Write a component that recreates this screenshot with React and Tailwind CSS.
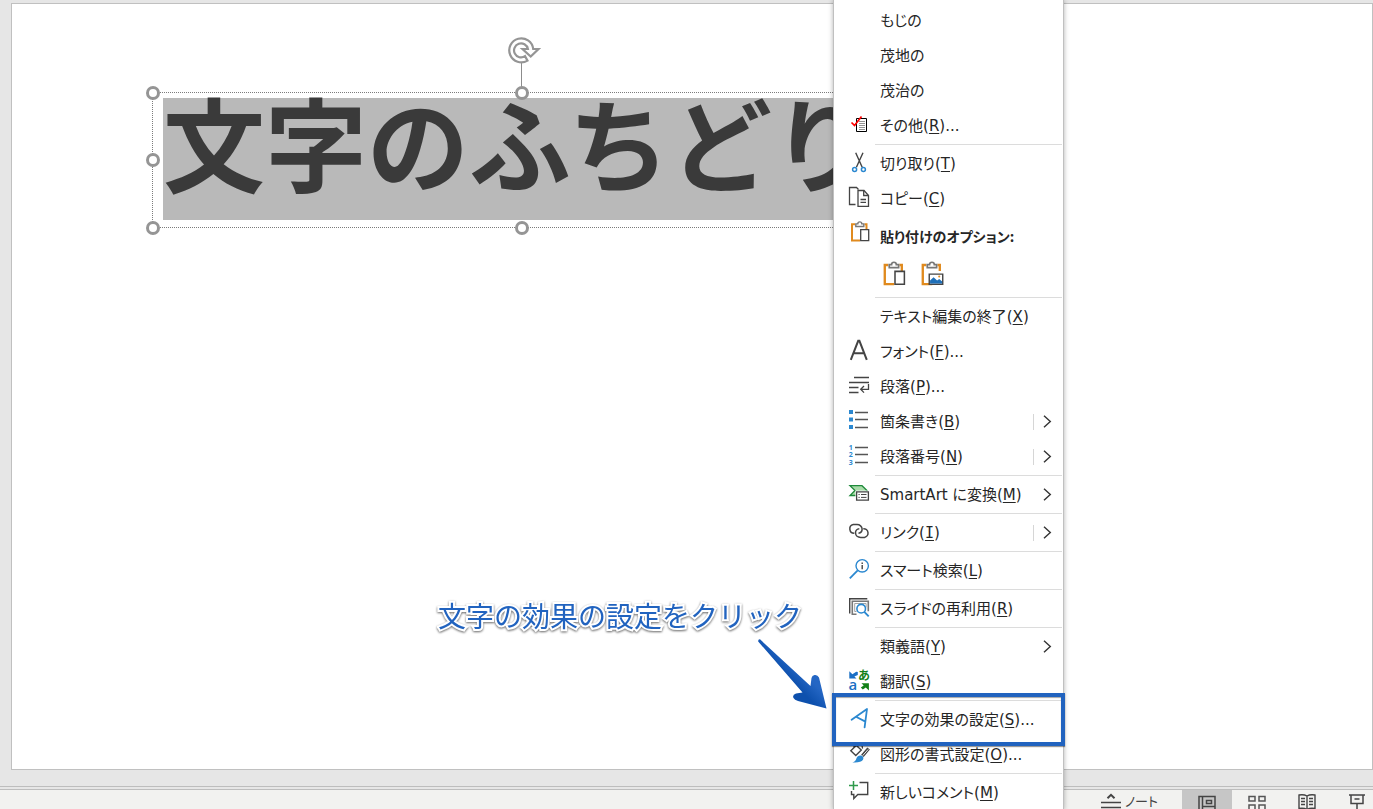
import React from "react";

const svg = { width: 22, height: 23, viewBox: "0 0 22 23", fill: "none", overflow: "visible", "aria-hidden": true };
const INK = "#444444";
const BLUE = "#2b88d0";

const icons = {
  more: (
    <svg {...svg}>
      <path d="M8.5 4.5h10v13h-10z" stroke="#000" fill="#fff" />
      <path d="M11 7.5h6M11 9.5h6M11 11.5h6M11 13.5h6M11 15.5h6" stroke="#888" strokeWidth="0.9" />
      <path d="M3.5 8.5l3 3 7-9" stroke="#f00" strokeWidth="1.7" />
    </svg>
  ),
  cut: (
    <svg {...svg}>
      <path d="M7.7 0.8l6.5 14.5M15 0.8L8.4 15.3" stroke={INK} strokeWidth="1.4" />
      <circle cx="6.6" cy="17.6" r="2" stroke={BLUE} strokeWidth="1.5" />
      <circle cx="15.4" cy="17.6" r="2" stroke={BLUE} strokeWidth="1.5" />
    </svg>
  ),
  copy: (
    <svg {...svg}>
      <path d="M7.5 17.5h-6V0.5h7l2 2" stroke={INK} strokeWidth="1.3" />
      <path d="M10 3.5h6l4.5 5v10.8H10z" stroke={INK} strokeWidth="1.3" fill="#fff" />
      <path d="M15.7 3.5v5h4.8M12.5 12.5h5.5M12.5 15.3h5.5" stroke={INK} strokeWidth="1.3" />
    </svg>
  ),
  font: (
    <svg {...svg}>
      <path d="M2.8 19.8L10.2 0.800h1.200L18.800 19.800M5.400 13.300h10.800" stroke={INK} strokeWidth="2" />
    </svg>
  ),
  paragraph: (
    <svg {...svg}>
      <path d="M6 2.5h15M1 7.5h20M1 12.5h9.5M1 17.5h9.5M20.5 9v5.3h-7.5M16 11l-3.3 3.3L16 17.6" stroke={INK} strokeWidth="1.3" />
    </svg>
  ),
  bullets: (
    <svg {...svg}>
      <path d="M1 0h4v4H1zM1 7.4h4v4H1zM1 15h4v4H1z" fill={BLUE} />
      <path d="M7 2.5h13M7 9.5h13M7 17.5h13" stroke="#555" strokeWidth="1.4" />
    </svg>
  ),
  numbers: (
    <svg {...svg}>
      <g fill={BLUE} fontSize="7" fontWeight="700" fontFamily="Open Sans, sans-serif">
        <text x="0.8" y="4.6">1</text>
        <text x="0.8" y="12.4">2</text>
        <text x="0.8" y="20">3</text>
      </g>
      <path d="M7 2.5h13M7 9.5h13M7 17.5h13" stroke="#555" strokeWidth="1.4" />
    </svg>
  ),
  smartart: (
    <svg {...svg}>
      <path d="M2 2.7h12L19 7.5l-5 5H2l5-5z" fill="#a9dba9" stroke="#1f8a3b" strokeWidth="1.3" />
      <path d="M7.4 7.6H22v10.9H7.4z" fill="#fff" />
      <path d="M8.6 8.8h11.8v8.4H8.6z" stroke={INK} strokeWidth="1.3" />
      <path d="M10.5 11.5h1.2M13 11.5h5.5M10.5 14.4h1.2M13 14.4h5.5" stroke={INK} />
    </svg>
  ),
  link: (
    <svg {...svg}>
      <path d="M6.3 12.3A4.4 4.4 0 0 1 5.3 3.6h3.8c2.6 0 5 1.9 5 4.5a4 4 0 0 1-3.6 4.1" stroke={INK} strokeWidth="1.5" />
      <path d="M15.3 7.7a4.4 4.4 0 0 1 1.2 8.7h-3.8c-2.8 0-5.2-1.900-5.200-4.600a4 4 0 0 1 3.800-4.100" stroke={INK} strokeWidth="1.5" />
    </svg>
  ),
  search: (
    <svg {...svg}>
      <circle cx="14.2" cy="6.8" r="6.2" stroke={BLUE} strokeWidth="1.4" />
      <path d="M9.7 11.3L1.8 19.4" stroke={BLUE} strokeWidth="1.8" />
      <path d="M14.2 3.6v1.3M14.2 6v4.3" stroke={INK} strokeWidth="1.4" />
    </svg>
  ),
  reuse: (
    <svg {...svg}>
      <path d="M1.7 16.5V1.7h17.6" stroke={INK} strokeWidth="1.4" />
      <path d="M8.5 17.3H4.3V4.3h16v10" stroke="#777" strokeWidth="1.6" />
      <path d="M8.5 14.5h-1.8v-8h11.4v4" stroke="#999" strokeWidth="0.9" />
      <circle cx="13.2" cy="11.7" r="4.3" stroke={BLUE} strokeWidth="1.6" fill="#fff" />
      <path d="M16.3 14.9l4.4 4.4" stroke={BLUE} strokeWidth="1.9" />
    </svg>
  ),
  translate: (
    <svg {...svg}>
      <path d="M1.3 1.3v7.2h7.200L6.400 6.400l3.400-1.400V2L8.200 1.800 4.400 4.200z" fill="#1a6fc4" />
      <path d="M20.900 20.500v-7.200h-7.400l2.200 2.200-2.900 1.900 2 2.100 3-2z" fill="#128018" />
      <text x="0.6" y="20.3" fontSize="15" fontWeight="600" fontFamily="Open Sans, sans-serif" fill="#1a6fc4">a</text>
      <text x="10.2" y="9.8" fontSize="12" fontWeight="700" fontFamily="Noto Sans CJK JP, sans-serif" fill="#128018">あ</text>
    </svg>
  ),
  effects: (
    <svg {...svg}>
      <path d="M3.600 11.800L19 1 16.600 19.300M8 8.800l9.400 4.800" stroke={BLUE} strokeWidth="1.800" strokeLinejoin="round" strokeLinecap="round" />
    </svg>
  ),
  shape: (
    <svg {...svg}>
      <path d="M8.3 2.5l5 4.500-5.500 5.500-5-4.800zM5.500 4.500L8 1.500l2.500 3" stroke={INK} strokeWidth="1.400" />
      <path d="M13 1.800c1 .8 1.600 2 1.500 3.800" stroke={INK} strokeWidth="1.300" />
      <path d="M20.600 5.500l-6.200 7.300" stroke={INK} strokeWidth="3.400" />
      <path d="M20.200 6.400l-5.500 6.300" stroke="#fff" strokeWidth="0.900" />
      <path d="M13.200 12.600c2 .6 2.800 2.300 1.800 4.200-1.500 2.400-5.500 3-10.600 2.600 2.900-1 3.400-2 4-3.900.7-2.100 2.800-3.400 4.800-2.900z" fill={BLUE} />
    </svg>
  ),
  comment: (
    <svg {...svg}>
      <path d="M5.500 0v9M1 4.500h9" stroke="#2f9a4b" strokeWidth="1.500" />
      <path d="M11.500 1.500h8.200v12H9.800l-4 4v-4H3.500V10" stroke={INK} strokeWidth="1.400" />
    </svg>
  ),
};

function Clipboard({ picture = false, large = false }) {
  return (
    <svg width={large ? 26 : 22} height={large ? 27 : 23} viewBox="0 0 22 23" fill="none" aria-hidden="true">
      <path d="M7 4.300H4v16.200h8M16.500 4.300h2v5" stroke="#e08a1e" strokeWidth="2" />
      <path d="M7.800 6.500V3.900h2a2 2 0 0 1 4 0h2v2.600z" stroke="#777" strokeWidth="1.400" fill="#fff" />
      {picture ? (
        <>
          <path d="M9.500 12h11.500v8.600H9.500z" fill="#fff" stroke={INK} strokeWidth="1.200" />
          <path d="M10.200 17.500l3-2.700 3 2.700 1.800-1.300 2.500 2.200V20H10.200z" fill="#1f6fb8" />
          <circle cx="18" cy="14" r="0.900" fill="#e08a1e" />
        </>
      ) : (
        <path d="M12.700 9.700h8v10.900h-8z" fill="#fff" stroke={INK} strokeWidth="1.300" />
      )}
    </svg>
  );
}

function Item({ icon, text, k, dots, arrow, split }) {
  return (
    <button type="button" role="menuitem" className="flex h-[35px] w-full items-center pr-[10px] pl-[14px] text-left">
      <span className="w-8 shrink-0">{icon && icons[icon]}</span>
      <span className="flex-1 whitespace-nowrap">
        {text}
        {k && (
          <>
            (<u className={k === "I" ? "font-['DejaVu_Sans_Mono'] underline-offset-2" : "underline-offset-2"}>{k}</u>)
          </>
        )}
        {dots && "..."}
      </span>
      {split && <span className="mr-[9px] h-4 w-px bg-[#d6d6d6]" />}
      {arrow && (
        <svg width="9" height="13" viewBox="0 0 9 13" fill="none" aria-hidden="true">
          <path d="M1 0.700l6.300 5.800L1 12.300" stroke="#333" strokeWidth="1.400" />
        </svg>
      )}
    </button>
  );
}

const Line = () => <div role="separator" className="my-px ml-[41px] h-px bg-[#dcdcdc]" />;

function Menu() {
  return (
    <div
      role="menu"
      className="absolute top-0 left-[833px] w-[231px] border-x border-[#c0c0c0] bg-white pt-[3px] pr-px font-['DejaVu_Sans','Noto_Sans_CJK_JP',sans-serif] text-[15px] leading-5 text-[#262626] shadow-[0_0_5px_rgba(0,0,0,0.3)] [font-feature-settings:'palt']"
    >
      <Item text="もじの" />
      <Item text="茂地の" />
      <Item text="茂治の" />
      <Item icon="more" text="その他" k="R" dots />
      <Line />
      <Item icon="cut" text="切り取り" k="T" />
      <Item icon="copy" text="コピー" k="C" />
      <div className="flex h-10 pt-1 pl-[14px]">
        <span className="w-8">
          <Clipboard />
        </span>
        <span className="pt-[6px] font-['Noto_Sans_CJK_JP',sans-serif] text-[14px] font-bold whitespace-nowrap">貼り付けのオプション:</span>
      </div>
      <div className="flex h-10 gap-3 pt-1 pl-[46px]">
        <button type="button" aria-label="貼り付け" className="flex h-7 w-[26px]">
          <Clipboard large />
        </button>
        <button type="button" aria-label="図" className="flex h-7 w-[26px]">
          <Clipboard large picture />
        </button>
      </div>
      <Line />
      <Item text="テキスト編集の終了" k="X" />
      <Item icon="font" text="フォント" k="F" dots />
      <Item icon="paragraph" text="段落" k="P" dots />
      <Item icon="bullets" text="箇条書き" k="B" arrow split />
      <Item icon="numbers" text="段落番号" k="N" arrow split />
      <Line />
      <Item icon="smartart" text="SmartArt に変換" k="M" arrow />
      <Line />
      <Item icon="link" text="リンク" k="I" arrow split />
      <Line />
      <Item icon="search" text="スマート検索" k="L" />
      <Line />
      <Item icon="reuse" text="スライドの再利用" k="R" />
      <Line />
      <Item text="類義語" k="Y" arrow />
      <Item icon="translate" text="翻訳" k="S" />
      <Line />
      <Item icon="effects" text="文字の効果の設定" k="S" dots />
      <Item icon="shape" text="図形の書式設定" k="O" dots />
      <Line />
      <Item icon="comment" text="新しいコメント" k="M" />
    </div>
  );
}

const handle = "absolute size-[14px] rounded-full border-[3px] border-[#959595] bg-white";

function TextBox() {
  return (
    <div className="absolute top-[88px] left-[140px] w-[739px] border border-dotted border-[#7c7c7c] pt-[5px] pb-[7px] pl-[10px]">
      <div className="w-[714px] bg-[#b9b9b9] pb-9 font-['Noto_Sans_CJK_JP',sans-serif] text-[102px] leading-[86px] font-bold whitespace-nowrap text-[#3a3a3a]">
        文字のふちどり
      </div>
      <span className="absolute -top-[30px] left-[368px] h-6 w-px bg-[#8c8c8c]" />
      <svg className="absolute -top-[57px] left-[353px]" width="36" height="30" viewBox="0 0 36 30" fill="none" stroke="#959595" strokeWidth="2.2" aria-hidden="true">
        <path d="M21.500 24.600A12 12 0 1 1 27.200 13H32.500L24.700 20.500 16.500 13H21.900A7 7 0 1 0 19 20.200z" />
      </svg>
      <span className={`${handle} -top-[7px] -left-[7px]`} />
      <span className={`${handle} -top-[7px] left-[362px]`} />
      <span className={`${handle} top-[60px] -left-[7px]`} />
      <span className={`${handle} -bottom-[8px] -left-[7px]`} />
      <span className={`${handle} -bottom-[8px] left-[362px]`} />
    </div>
  );
}

function StatusBar() {
  const view = "flex w-[50px] shrink-0 justify-center pt-1";
  return (
    <footer className="mt-[2px] flex h-5 justify-end overflow-hidden border-t border-[#bdbdbd] bg-[#f2f2f0] font-['Noto_Sans_CJK_JP',sans-serif] text-[#444]">
      <button type="button" className="mr-6 flex gap-1 pt-[3px] text-[13px] leading-4 [font-feature-settings:'palt']">
        <svg width="20" height="16" viewBox="0 0 20 16" fill="none" stroke="#444" strokeWidth="1.300" aria-hidden="true">
          <path d="M0 9.500h20M0 14.500h20" />
          <path d="M6.500 5.200L10 1.800l3.500 3.400" strokeWidth="2" />
        </svg>
        ノート
      </button>
      <nav aria-label="表示" className="-mr-[9px] flex">
        <button type="button" aria-label="標準" className={`${view} bg-[#c6c6c6]`}>
          <svg width="18" height="18" viewBox="0 0 18 18" fill="none" stroke="#444" strokeWidth="1.500" aria-hidden="true">
            <path d="M1 2.500h16v15H1zM4.500 2.500v15M4.500 12.500H17M8.500 6.500h5v3h-5z" />
          </svg>
        </button>
        <button type="button" aria-label="スライド一覧" className={view}>
          <svg width="18" height="18" viewBox="0 0 18 18" fill="none" stroke="#555" strokeWidth="1.500" aria-hidden="true">
            <path d="M1 2.500h6v4.500H1zM11 2.500h6v4.500h-6zM1 11h6v5H1zM11 11h6v5h-6z" />
          </svg>
        </button>
        <button type="button" aria-label="閲覧表示" className={view}>
          <svg width="18" height="18" viewBox="0 0 18 18" fill="none" stroke="#444" strokeWidth="1.400" aria-hidden="true">
            <path d="M9 2C7 .800 4 .500 1 1v13.500c3-.500 6-.200 8 1 2-1.200 5-1.500 8-1V1c-3-.500-6-.200-8 1zM9 2v14M3 4.500h4M3 7.500h4M3 10.500h4M11 4.500h4M11 7.500h4M11 10.500h4" />
          </svg>
        </button>
        <button type="button" aria-label="スライド ショー" className={view}>
          <svg width="18" height="18" viewBox="0 0 18 18" fill="none" stroke="#444" strokeWidth="1.500" aria-hidden="true">
            <path d="M1 1h16M3 1v8.500h12V1M6.500 5h5M9 9.500v6M6 16.500h6" />
          </svg>
        </button>
      </nav>
    </footer>
  );
}

export default function App() {
  return (
    <div className="relative flex h-screen flex-col overflow-hidden bg-[#e6e6e6]">
      <main className="flex flex-1 border-b border-[#bdbdbd] pt-[3px] pb-4 pl-[11px]">
        <section className="relative flex-1 border border-[#c0c0c0] bg-white">
          <TextBox />
        </section>
      </main>
      <StatusBar />
      <Menu />
      <p className="absolute top-[595px] left-[438px] font-['Noto_Sans_CJK_JP',sans-serif] text-[28px] leading-10 whitespace-nowrap text-[#2163bf] drop-shadow-[0_1px_1px_rgba(0,0,0,0.6)] [-webkit-text-stroke:4px_white] [paint-order:stroke]">
        文字の効果の設定をクリック
      </p>
      <svg className="absolute top-[636px] left-[754px]" width="76" height="78" viewBox="0 0 76 78" aria-hidden="true">
        <defs>
          <linearGradient id="arrow" x1="0.350" y1="0.650" x2="0.650" y2="0.350">
            <stop offset="0.300" stopColor="#0d50ad" />
            <stop offset="0.800" stopColor="#2466c4" />
          </linearGradient>
        </defs>
        <path
          d="M6 3.300Q4 3 4.200 5.500L48.500 56.500L42 57.500Q38 59 39.500 62Q40.500 64 44 65L72.500 72.500L65 41.500Q63.500 38.500 60.500 39Q58 39.500 57.500 42L56.500 50Z"
          fill="url(#arrow)"
        />
      </svg>
      <div className="absolute top-[693px] left-[832px] h-[53px] w-[233px] border-4 border-[#2163bf] shadow-[0_1px_1px_rgba(0,0,0,0.4),inset_0_1px_1px_rgba(0,0,0,0.35)]" />
    </div>
  );
}
